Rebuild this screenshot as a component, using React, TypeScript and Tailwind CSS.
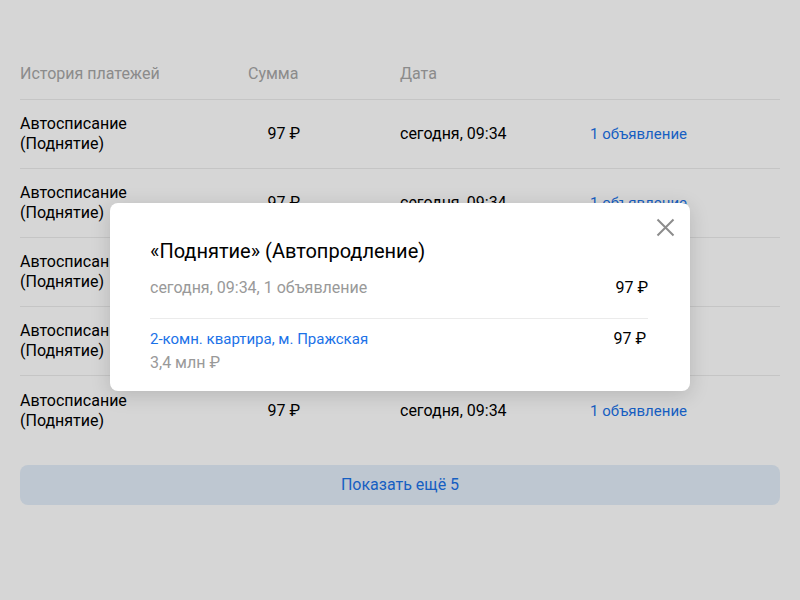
import React from "react";

const rows = Array.from({ length: 5 });

export default function App() {
  return (
    <div className="relative w-[800px] h-[600px] bg-white overflow-hidden" style={{ fontFamily: "Roboto, 'Noto Sans', sans-serif" }}>
      <div className="px-5 pt-[60px]">
        <div className="grid grid-cols-[228px_152px_190px_1fr] h-[40px] border-b border-[#ebebeb] text-[16px] text-[#a6a6a6] leading-[28px]">
          <div>История платежей</div>
          <div>Сумма</div>
          <div>Дата</div>
          <div></div>
        </div>
        {rows.map((_, i) => (
          <div
            key={i}
            className={`grid grid-cols-[228px_152px_190px_1fr] items-center h-[69px] text-[16px] leading-[20px] text-black ${i < 4 ? "border-b border-[#ebebeb]" : ""}`}
          >
            <div>Автосписание<br />(Поднятие)</div>
            <div className="w-[52px] text-right">97 ₽</div>
            <div>сегодня, 09:34</div>
            <div className="text-[#1b72e8] text-[15px]">1 объявление</div>
          </div>
        ))}
        <div className="mt-[20px] h-[40px] rounded-lg bg-[#e3eefa] flex items-center justify-center text-[16px] text-[#1b72e8]">
          Показать ещё 5
        </div>
      </div>

      <div className="absolute inset-0 bg-black/[0.16]" />

      <div className="absolute left-[110px] top-[203px] w-[580px] h-[188px] bg-white rounded-lg shadow-[0_4px_20px_rgba(0,0,0,0.15)] pl-[40px] pr-[42px] pt-[34px]">
        <button className="absolute right-[15px] top-[15px] w-[19px] h-[19px] flex items-center justify-center">
          <svg width="19" height="19" viewBox="0 0 19 19" fill="none" stroke="#8c8c8c" strokeWidth="2">
            <path d="M1.5 1.5L17.5 17.5M17.5 1.5L1.5 17.5" />
          </svg>
        </button>
        <div className="text-[20px] leading-[28px] text-black">«Поднятие» (Автопродление)</div>
        <div className="mt-[13px] flex justify-between text-[16px] leading-[20px]">
          <span className="text-[#999999]">сегодня, 09:34, 1 объявление</span>
          <span className="text-black">97 ₽</span>
        </div>
        <div className="mt-[20px] border-t border-[#ebebeb]" />
        <div className="mt-[10px] flex justify-between text-[15px] leading-[20px]">
          <div>
            <div className="text-[#1b72e8]">2-комн. квартира, м. Пражская</div>
            <div className="mt-[4px] text-[#999999] text-[16px]">3,4 млн ₽</div>
          </div>
          <span className="text-black text-[16px] pr-[2px]">97 ₽</span>
        </div>
      </div>
    </div>
  );
}
